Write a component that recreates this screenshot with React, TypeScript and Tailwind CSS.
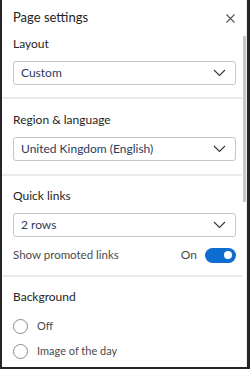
import React from 'react';

function Chevron() {
  return (
    <svg width="13" height="8" viewBox="0 0 13 8" fill="none">
      <path d="M1 1l5.5 5.5L12 1" stroke="#333" strokeWidth="1.1" />
    </svg>
  );
}

function Select({ value }: { value: string }) {
  return (
    <div className="mt-[8px] mr-[6px] h-[24px] flex items-center justify-between border border-[#c6c6c6] rounded-[3px] pl-[7px] pr-[9px]">
      <span className="text-[12px] text-[#2b3b5c]">{value}</span>
      <Chevron />
    </div>
  );
}

function Divider() {
  return <div className="h-[2px] bg-[#ebebeb] -ml-[11px]" />;
}

function Radio({ label, className }: { label: string; className: string }) {
  return (
    <div className={`h-[20px] flex items-center gap-[9px] ${className}`}>
      <div className="w-[15px] h-[15px] rounded-full border border-[#8a8a8a]" />
      <span className="text-[11px] text-[#4a4a4a]">{label}</span>
    </div>
  );
}

export default function App() {
  return (
    <div
      className="w-[250px] h-[369px] flex bg-white border-l-2 border-r-[3px] border-b-2 border-[#262626] overflow-hidden"
      style={{ fontFamily: 'Lato, "Noto Sans", sans-serif' }}
    >
      <div className="flex-1 pl-[11px] flex flex-col">
        <div className="mt-[8px] h-[20px] flex items-center justify-between pr-[7px]">
          <span className="text-[13px] text-[#242424]">Page settings</span>
          <svg width="9" height="9" viewBox="0 0 9 9" fill="none">
            <path d="M0.5 0.5l8 8M8.5 0.5l-8 8" stroke="#555" strokeWidth="1.1" />
          </svg>
        </div>

        <div className="mt-[7px] h-[18px] leading-[18px] text-[12px] text-[#242424]">Layout</div>
        <Select value="Custom" />
        <div className="mt-[12px]" />
        <Divider />

        <div className="mt-[12px] h-[18px] leading-[18px] text-[12px] text-[#242424]">Region &amp; language</div>
        <Select value="United Kingdom (English)" />
        <div className="mt-[13px]" />
        <Divider />

        <div className="mt-[11px] h-[18px] leading-[18px] text-[12px] text-[#242424]">Quick links</div>
        <Select value="2 rows" />
        <div className="mt-[8px] h-[20px] mr-[6px] flex items-center justify-between">
          <span className="text-[11.5px] text-[#4a4a4a]">Show promoted links</span>
          <div className="flex items-center gap-[8px]">
            <span className="text-[12px] text-[#4a4a4a]">On</span>
            <div className="w-[31px] h-[15px] rounded-full bg-[#0f6cd0] flex items-center justify-end pr-[4px]">
              <div className="w-[8px] h-[8px] rounded-full bg-white" />
            </div>
          </div>
        </div>
        <div className="mt-[10px]" />
        <Divider />

        <div className="mt-[11px] h-[18px] leading-[18px] text-[12px] text-[#242424]">Background</div>
        <Radio label="Off" className="mt-[10px]" />
        <Radio label="Image of the day" className="mt-[5px]" />
      </div>
      <div className="w-[5px] flex flex-col pt-[36px] pl-px border-r border-[#ececec]">
        <div className="w-[3px] h-[166px] bg-[#c8c8c8]" />
      </div>
    </div>
  );
}
